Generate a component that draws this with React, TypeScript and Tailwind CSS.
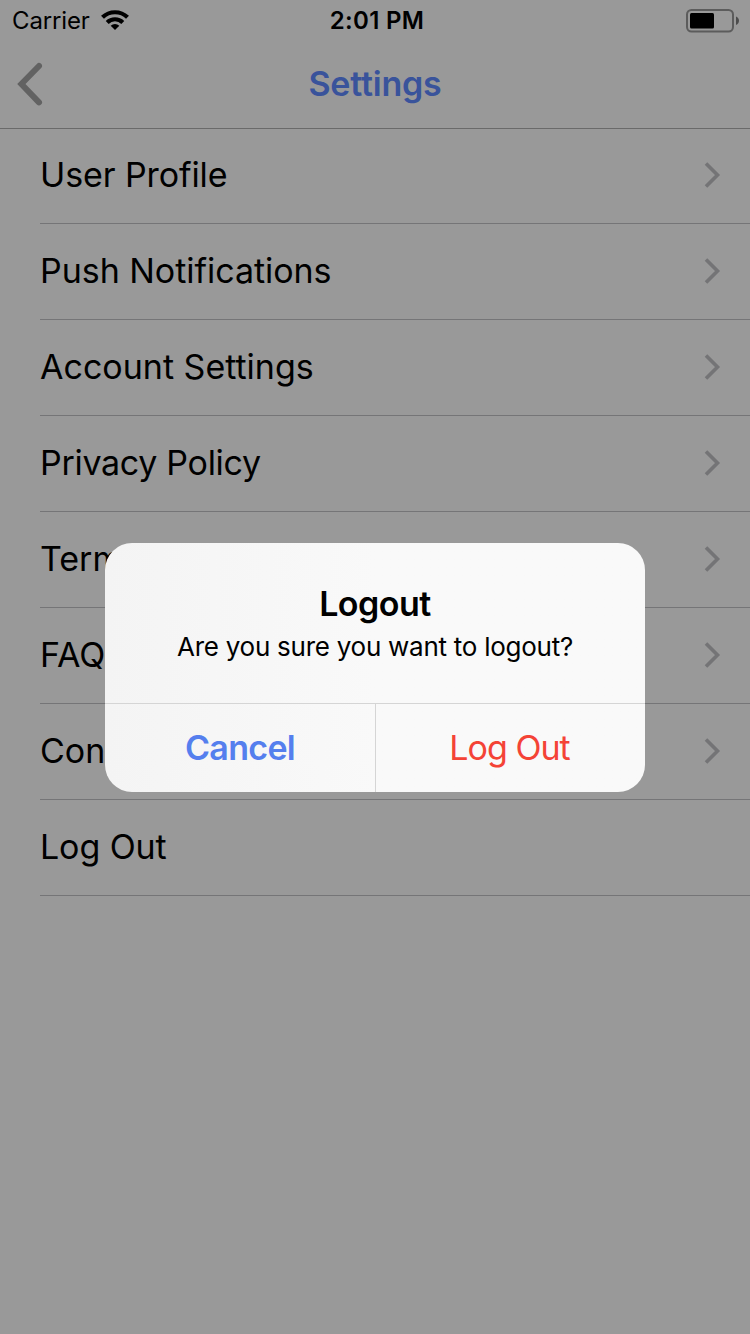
const rows = [
  { label: "User Profile", style: "h-[95px] tracking-[-0.1px]", text: "mb-px", link: true },
  { label: "Push Notifications", style: "h-24 tracking-[-0.04px]", text: "", link: true },
  { label: "Account Settings", style: "h-24", text: "", link: true },
  { label: "Privacy Policy", style: "h-24 tracking-[-0.3px]", text: "", link: true },
  { label: "Terms", style: "h-24", text: "", link: true },
  { label: "FAQ", style: "h-24", text: "", link: true },
  { label: "Contact", style: "h-24", text: "", link: true },
  { label: "Log Out", style: "h-24 tracking-[-0.1px]", text: "", link: false },
];

function Chevron() {
  return (
    <svg width="18" height="28" viewBox="0 0 18 28" fill="none" stroke="#747476" strokeWidth="3.6" className="shrink-0">
      <path d="M3 2.5 L14.5 14 L3 25.5" />
    </svg>
  );
}

function BackIcon() {
  return (
    <svg width="28" height="44" viewBox="0 0 28 44" fill="none" stroke="#626262" strokeWidth="6" strokeLinecap="round">
      <path d="M24 4 L6.4 22 L24 40.4" />
    </svg>
  );
}

function WifiIcon() {
  return (
    <svg width="28" height="20" viewBox="0 0 28 20" fill="none" stroke="#000" strokeWidth="4.2">
      <path d="M1.5 7.3 A18 18 0 0 1 26.5 7.3" />
      <path d="M6.2 12.4 A11.2 11.2 0 0 1 21.8 12.4" />
      <path d="M14 20 L9.7 15.8 A6.2 6.2 0 0 1 18.3 15.8 Z" fill="#000" stroke="none" />
    </svg>
  );
}

function BatteryIcon() {
  return (
    <svg width="54" height="24" viewBox="0 0 54 24">
      <rect x="1" y="1" width="46" height="21.5" rx="4.5" fill="none" stroke="#5c5c5c" strokeWidth="2" />
      <rect x="4" y="4" width="24" height="15.5" rx="1.5" fill="#000" />
      <path d="M50 7.5 C54 9 54 14.5 50 16 Z" fill="#4c4c4c" />
    </svg>
  );
}

export default function App() {
  return (
    <div className="relative flex h-[1334px] w-[750px] flex-col overflow-hidden bg-[#999999] font-['Inter',sans-serif] text-black">
      <div className="grid h-10 shrink-0 grid-cols-3 items-center text-[24px] leading-none">
        <div className="flex items-center gap-[11px] pl-3">
          <span className="pt-[2px] tracking-[-0.15px]">Carrier</span>
          <WifiIcon />
        </div>
        <span className="pl-1 pt-[2px] text-center font-semibold tracking-[0.3px]">2:01 PM</span>
        <div className="flex justify-end pr-[10px] pt-px">
          <BatteryIcon />
        </div>
      </div>
      <div className="grid h-[89px] shrink-0 grid-cols-[60px_1fr_60px] items-center border-b border-[#6a6a6a]">
        <div className="flex pl-[15px]">
          <BackIcon />
        </div>
        <h1 className="pb-px text-center text-[34px] font-semibold tracking-[-0.2px] text-[#39539b]">Settings</h1>
      </div>
      {rows.map((r) => (
        <div
          key={r.label}
          className={`ml-10 flex shrink-0 items-center justify-between border-b border-[#757577] pb-[2px] pr-[29px] text-[34px] ${r.style}`}
        >
          <span className={r.text}>{r.label}</span>
          {r.link && <Chevron />}
        </div>
      ))}
      <div className="absolute left-[105px] top-[543px] flex h-[249px] w-[540px] flex-col overflow-hidden rounded-[27px] bg-[#f9f9f9] bg-linear-to-r from-[#f4f4f4] to-[#f9f9f9] to-50%">
        <div className="flex h-40 flex-col items-center pt-[35px]">
          <h2 className="text-[34px] font-semibold leading-[51px] tracking-[-0.5px]">Logout</h2>
          <p className="text-[26px] leading-[35px] tracking-[-0.26px]">Are you sure you want to logout?</p>
        </div>
        <div className="grid grow grid-cols-[270px_1fr] border-t border-[#d5d5d5] text-[34px]">
          <button className="pb-px font-semibold tracking-[-0.7px] text-[#557fee]">Cancel</button>
          <button className="border-l border-[#d5d5d5] pb-px pr-[2px] tracking-[-0.95px] text-[#f44336]">Log Out</button>
        </div>
      </div>
    </div>
  );
}
